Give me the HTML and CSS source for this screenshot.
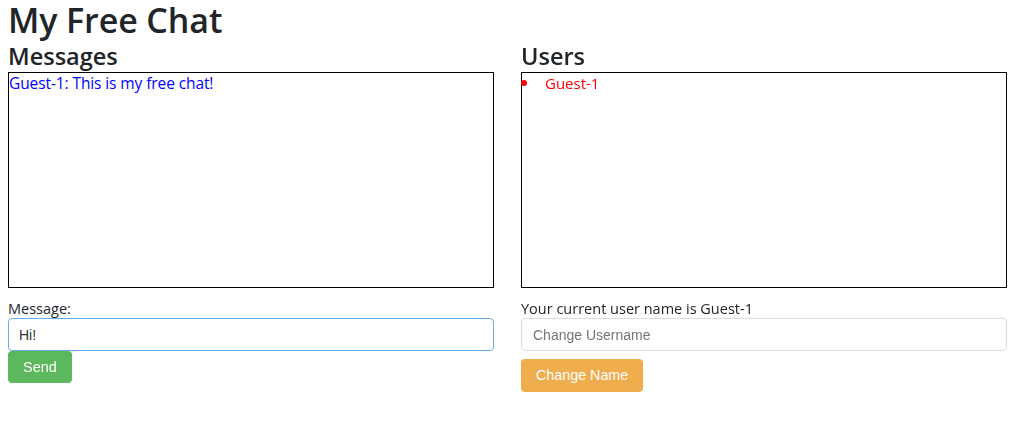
FILE: index.html
```html
<!DOCTYPE html>
<html>
<head>
<meta charset="utf-8">
<title>My Free Chat</title>
<link rel="stylesheet" href="styles.css">
</head>
<body>
<h1 class="title">My Free Chat</h1>
<div class="columns">
  <div class="col">
    <h3 class="section">Messages</h3>
    <div class="box">
      <div class="msg">Guest-1: This is my free chat!</div>
    </div>
    <label class="label">Message:</label>
    <input class="field focused" type="text" value="Hi!" autofocus>
    <button class="btn btn-green">Send</button>
  </div>
  <div class="col">
    <h3 class="section">Users</h3>
    <div class="box">
      <ul class="users"><li class="user">Guest-1</li></ul>
    </div>
    <label class="label">Your current user name is Guest-1</label>
    <input class="field" type="text" placeholder="Change Username">
    <button class="btn btn-orange spaced">Change Name</button>
  </div>
</div>
</body>
</html>
```
FILE: styles.css
```css
html, body {
  background: #fff;
}
body {
  margin: 0 8px;
  font-family: "Open Sans", "Noto Sans", sans-serif;
  color: #212529;
}
.title {
  margin: 0;
  font-size: 34px;
  font-weight: 600;
  line-height: 41px;
  letter-spacing: -0.1px;
}
.columns {
  display: grid;
  grid-template-columns: 486px 486px;
  column-gap: 27px;
}
.col {
  display: flex;
  flex-direction: column;
  align-items: flex-start;
}
.section {
  margin: 0;
  font-size: 23.5px;
  font-weight: 600;
  line-height: 30px;
  padding-bottom: 1px;
}
.box {
  box-sizing: border-box;
  width: 486px;
  height: 216px;
  border: 1px solid #000;
  font-size: 15px;
  line-height: 18px;
}
.msg {
  color: #0000ff;
  padding-top: 1px;
  font-size: 15.5px;
  letter-spacing: -0.1px;
}
.users {
  margin: 0;
  padding: 1px 0 0 0;
  list-style: none;
  color: #ff0000;
}
.user {
  display: flex;
  align-items: center;
  gap: 18px;
  margin-left: -1px;
}
.user::before {
  content: "";
  width: 6px;
  height: 6px;
  border-radius: 50%;
  background: #ff0000;
}
.label {
  margin-top: 12px;
  font-size: 14.5px;
  line-height: 18px;
}
.field {
  box-sizing: border-box;
  width: 486px;
  height: 33px;
  margin: 0;
  padding: 0 11px;
  border: 1px solid #dcdcdc;
  border-radius: 4px;
  font-family: "Liberation Sans", Arial, sans-serif;
  font-size: 14px;
  color: #333;
  outline: none;
}
.field::placeholder {
  color: #757575;
}
.field.focused {
  border-color: #66afe9;
  padding-left: 10px;
}
.btn {
  box-sizing: border-box;
  height: 33px;
  margin: 0;
  padding: 0 15px;
  border: 0;
  border-radius: 4px;
  color: #fff;
  font-family: "Liberation Sans", Arial, sans-serif;
  font-size: 14.3px;
  line-height: 33px;
}
.btn-green {
  background: #5cb85c;
  height: 32px;
  line-height: 32px;
  font-size: 14.5px;
}
.btn-orange {
  background: #f0ad4e;
}
.spaced {
  margin-top: 8px;
}
```
